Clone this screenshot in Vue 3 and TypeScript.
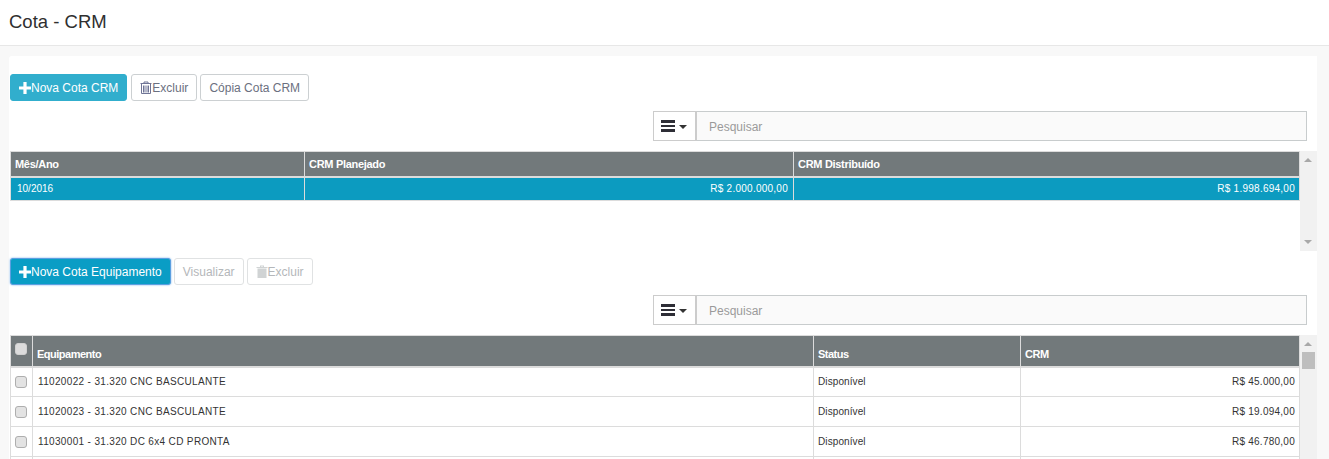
<script setup lang="ts">
interface Row { equip: string; status: string; crm: string }
const rows: Row[] = [
  { equip: '11020022 - 31.320 CNC BASCULANTE', status: 'Disponível', crm: 'R$ 45.000,00' },
  { equip: '11020023 - 31.320 CNC BASCULANTE', status: 'Disponível', crm: 'R$ 19.094,00' },
  { equip: '11030001 - 31.320 DC 6x4 CD PRONTA', status: 'Disponível', crm: 'R$ 46.780,00' },
]
</script>

<template>
  <div class="page">
    <header class="top"><h1>Cota - CRM</h1></header>
    <main class="panel">
      <div class="toolbar first">
        <button class="btn info">
          <svg class="ico" viewBox="0 0 12 12"><path d="M4.400 0h3.200v4.400H12v3.200H7.600V12H4.400V7.600H0V4.400h4.400z" fill="#fff" /></svg>Nova Cota CRM
        </button>
        <button class="btn">
          <svg class="ico trash" viewBox="0 0 12 13" fill="none" stroke="#6f7496">
            <path d="M.5 2.500h11M4 2.500V1h4v1.500" />
            <path d="M1.500 3v9.500h9V3M3.500 4.500V11.500M5 4.500V11.500M7 4.500V11.500M8.500 4.500V11.500" />
          </svg>Excluir
        </button>
        <button class="btn">Cópia Cota CRM</button>
      </div>
      <div class="search">
        <button class="menu" aria-label="Menu">
          <span class="bars"><i></i><i></i><i></i></span><span class="caret"></span>
        </button>
        <input class="input" placeholder="Pesquisar" />
      </div>
      <div class="grid-wrap short">
        <table class="grid">
          <colgroup><col style="width:294px" /><col style="width:489px" /><col /></colgroup>
          <thead><tr><th>Mês/Ano</th><th>CRM Planejado</th><th>CRM Distribuído</th></tr></thead>
          <tbody>
            <tr class="selected"><td class="date">10/2016</td><td class="num">R$ 2.000.000,00</td><td class="num end">R$ 1.998.694,00</td></tr>
          </tbody>
        </table>
        <div class="scroll">
          <span class="arrow up"></span><span class="arrow down"></span>
        </div>
      </div>
      <div class="toolbar second">
        <button class="btn primary">
          <svg class="ico" viewBox="0 0 12 12"><path d="M4.400 0h3.200v4.400H12v3.200H7.600V12H4.400V7.600H0V4.400h4.400z" fill="#fff" /></svg>Nova Cota Equipamento
        </button>
        <button class="btn disabled">Visualizar</button>
        <button class="btn disabled">
          <svg class="ico trash" viewBox="0 0 12 13" fill="#d0d3d4">
            <path d="M.5 2h11v1H.5zM4 .5h4V2H7V1.500H5V2H4zM1.500 3.500h9V13h-9z" />
          </svg>Excluir
        </button>
      </div>
      <div class="search">
        <button class="menu" aria-label="Menu">
          <span class="bars"><i></i><i></i><i></i></span><span class="caret"></span>
        </button>
        <input class="input" placeholder="Pesquisar" />
      </div>
      <div class="grid-wrap tall">
        <table class="grid equip">
          <colgroup><col style="width:22px" /><col style="width:781px" /><col style="width:207px" /><col /></colgroup>
          <thead>
            <tr><th class="chk"><span class="box head"></span></th><th>Equipamento</th><th>Status</th><th>CRM</th></tr>
          </thead>
          <tbody>
            <tr v-for="r in rows" :key="r.equip">
              <td class="chk"><span class="box"></span></td>
              <td class="code">{{ r.equip }}</td>
              <td class="state">{{ r.status }}</td>
              <td class="num end">{{ r.crm }}</td>
            </tr>
            <tr class="stub"><td></td><td></td><td></td><td></td></tr>
          </tbody>
        </table>
        <div class="scroll">
          <span class="arrow up"></span><span class="thumb"></span>
        </div>
      </div>
    </main>
  </div>
</template>

<style>
html, body { margin: 0; background: #f8f8f8; overflow: hidden; }
</style>

<style scoped>
.page {
  height: 459px;
  overflow: hidden;
  font-family: "Liberation Sans", Arial, sans-serif;
  color: #333;
  background: #f8f8f8;
}
.top {
  height: 45px;
  background: #fff;
  border-bottom: 1px solid #e7e7e7;
}
h1 {
  margin: 0;
  padding: 11px 0 0 9px;
  font-size: 18.5px;
  line-height: 22px;
  font-weight: 400;
  color: #2f2f2f;
}
.panel {
  margin: 10px 12px 0 9px;
  padding: 18px 0 0 1px;
  background: #fff;
  border-radius: 3px 0 0 0;
}
.toolbar { display: flex; }
.btn {
  height: 27px;
  box-sizing: border-box;
  padding: 0 8px;
  margin-right: 3px;
  display: inline-flex;
  align-items: center;
  font: 12px/1 "Liberation Sans", Arial, sans-serif;
  color: #6b7080;
  background: #fff;
  border: 1px solid #ccd0d2;
  border-radius: 3px;
}
.btn.info { background: #31aecd; border-color: #31aecd; color: #fff; margin-right: 4px; }
.btn.primary {
  background: #0a9dc5;
  border: 1px solid #5b9fe0;
  box-shadow: 0 0 2px #6aa6e6;
  color: #fff;
}
.btn.disabled { color: #b4b7ba; border-color: #e0e2e3; }
.ico { width: 12px; height: 12px; flex: none; }
.trash { height: 13px; }
.toolbar.first { margin-bottom: 10px; }
.toolbar.second { margin-top: 7px; margin-bottom: 10px; }
.search { display: flex; width: 654px; margin-left: 643px; height: 30px; margin-bottom: 10px; }
.menu {
  width: 44px;
  height: 30px;
  padding: 0 0 0 7px;
  box-sizing: border-box;
  display: flex;
  align-items: center;
  background: #fff;
  border: 1px solid #ccc;
  border-right: 2px solid #ccc;
}
.bars { display: flex; flex-direction: column; gap: 2px; width: 14px; }
.bars i { display: block; height: 2.500px; background: #2e2e36; }
.caret {
  margin-left: 4px;
  margin-top: 2px;
  border-left: 4px solid transparent;
  border-right: 4px solid transparent;
  border-top: 4px solid #333;
}
.input {
  flex: 1;
  min-width: 0;
  height: 30px;
  box-sizing: border-box;
  padding: 1px 12px 0;
  border: 1px solid #c8cccd;
  border-left: 0;
  background: #fafafa;
  font: 12px "Liberation Sans", Arial, sans-serif;
  outline: none;
}
.input::placeholder { color: #9a9a9a; opacity: 1; }
.grid-wrap { display: flex; width: 1307px; overflow: hidden; }
.grid-wrap.short { height: 100px; }
.grid-wrap.tall { height: 124px; }
.grid {
  width: 1290px;
  height: fit-content;
  table-layout: fixed;
  border-collapse: collapse;
  font-size: 10px;
  flex: none;
}
th {
  height: 25px;
  padding: 0 4px;
  background: #72797b;
  color: #fff;
  font-size: 11px;
  font-weight: 700;
  letter-spacing: -0.3px;
  text-align: left;
  border: 1px solid #dcdcdc;
  border-bottom-width: 2px;
  box-sizing: border-box;
}
td {
  padding: 0 5px;
  height: 24px;
  box-sizing: border-box;
  border: 1px solid #dcdcdc;
  white-space: nowrap;
}
.selected td { background: #0c9bc0; color: #fff; }
.date { padding-left: 6px; }
.num { text-align: right; letter-spacing: 0.25px; }
td.end { padding-right: 4px; }
.equip th { height: 31px; padding-top: 6px; letter-spacing: -0.5px; }
.equip td { height: 30px; color: #333; padding-left: 5px; }
.equip .code { letter-spacing: 0.34px; }
.equip td.state { padding-left: 4px; letter-spacing: 0.1px; }
.equip th.chk, .equip td.chk { padding: 0 0 0 4px; }
.equip th.chk { vertical-align: middle; }
.box {
  display: block;
  width: 10px;
  height: 10px;
  background: #e3e3e3;
  border: 1px solid #aeaeae;
  border-radius: 3px;
}
.box.head { background: #dcdcdc; border-color: #d0d0d0; margin-top: -3px; }
.scroll {
  position: relative;
  width: 17px;
  flex: none;
  background: #f1f1f1;
}
.arrow {
  position: absolute;
  left: 4px;
  border-left: 4px solid transparent;
  border-right: 4px solid transparent;
}
.arrow.up { top: 7px; border-bottom: 4px solid #a8a8a8; }
.arrow.down { bottom: 7px; border-top: 4px solid #a8a8a8; }
.thumb {
  position: absolute;
  left: 2px;
  top: 17px;
  width: 13px;
  height: 17px;
  background: #bebebe;
}
</style>
